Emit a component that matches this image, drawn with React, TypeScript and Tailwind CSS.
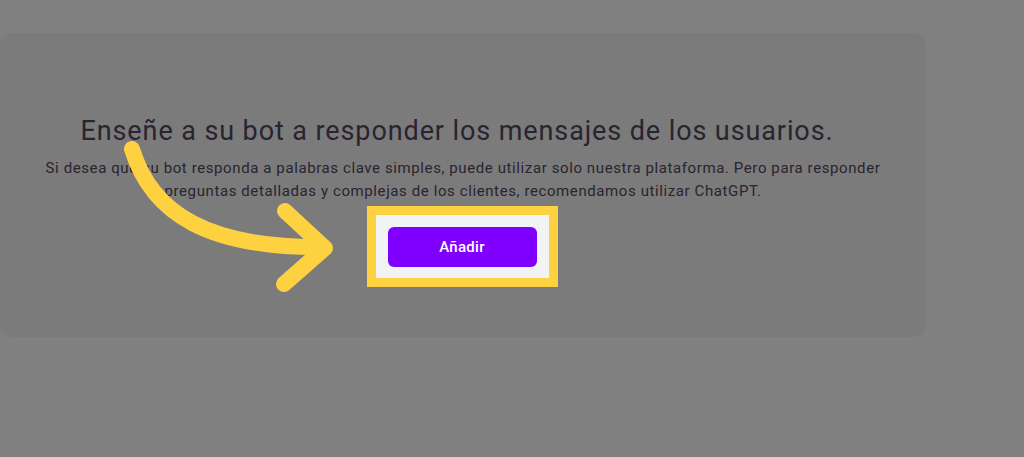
import React from "react";

export default function App() {
  return (
    <div
      className="relative h-[457px] w-[1024px] overflow-hidden bg-[#808080]"
      style={{ fontFamily: "Roboto, 'Noto Sans', sans-serif" }}
    >
      <div className="pt-[33px]">
        <div className="flex h-[304px] w-[926px] flex-col items-center rounded-xl bg-[#7a7b7a] pt-[80px]">
          <h1 className="mr-[12px] text-[27px] leading-[36px] font-normal tracking-[0.9px] text-[#2a2330]">
            Enseñe a su bot a responder los mensajes de los usuarios.
          </h1>
          <p className="mt-[8px] text-center text-[15px] leading-[23px] tracking-[0.6px] text-[#2a2330]">
            Si desea que su bot responda a palabras clave simples, puede utilizar solo nuestra plataforma. Pero para responder
            <br />
            preguntas detalladas y complejas de los clientes, recomendamos utilizar ChatGPT.
          </p>
          <div className="mt-[3px] mr-[2px] border-[9px] border-[#fed141] bg-[#f2f3f5] px-[12px] pt-[12px] pb-[11px]">
            <button className="flex h-[40px] w-[149px] items-center justify-center rounded-[6px] bg-[#8000ff] text-[15px] font-medium tracking-[0.3px] text-white">
              Añadir
            </button>
          </div>
        </div>
      </div>
      <svg
        className="pointer-events-none absolute left-0 top-0"
        width="1024"
        height="457"
        viewBox="0 0 1024 457"
        fill="none"
      >
        <path
          d="M132 149 C 152 215, 210 248, 322 247"
          stroke="#fed141"
          strokeWidth="16"
          strokeLinecap="round"
          fill="none"
        />
        <path
          d="M285 211 L325 248 L284 284"
          stroke="#fed141"
          strokeWidth="16"
          strokeLinecap="round"
          strokeLinejoin="round"
          fill="none"
        />
      </svg>
    </div>
  );
}
